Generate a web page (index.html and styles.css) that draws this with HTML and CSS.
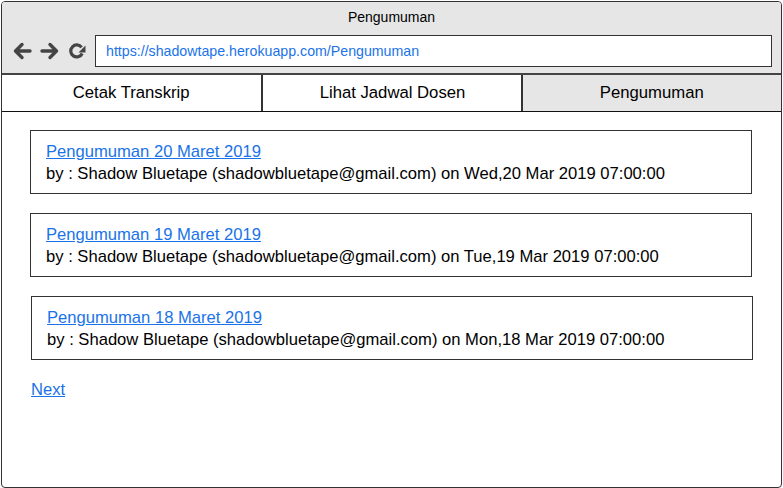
FILE: index.html
```html
<!DOCTYPE html>
<html>
<head>
<meta charset="utf-8">
<link rel="stylesheet" href="styles.css">
</head>
<body>
<div class="frame">
  <div class="chrome">
    <div class="title">Pengumuman</div>
    <div class="navbar">
      <div class="icons">
        <svg width="22" height="22" viewBox="0 0 22 22"><path d="M19 11H5M11 4.5L4.5 11L11 17.5" fill="none" stroke="#444" stroke-width="3.4" stroke-linecap="round" stroke-linejoin="round"/></svg>
        <svg width="22" height="22" viewBox="0 0 22 22"><path d="M3 11H17M11 4.5L17.5 11L11 17.5" fill="none" stroke="#444" stroke-width="3.4" stroke-linecap="round" stroke-linejoin="round"/></svg>
        <svg width="20" height="20" viewBox="0 0 20 20"><path d="M15.2 12.5A6 6 0 1 1 14.6 6.4" fill="none" stroke="#444" stroke-width="3.2"/><path d="M18.5 4.5L18.5 11.5L11.5 11.5Z" fill="#444"/></svg>
      </div>
      <div class="url">https://shadowtape.herokuapp.com/Pengumuman</div>
    </div>
  </div>
  <div class="tabs">
    <div class="tab">Cetak Transkrip</div>
    <div class="tab">Lihat Jadwal Dosen</div>
    <div class="tab active">Pengumuman</div>
  </div>
  <div class="content">
    <div class="card">
      <a href="#" class="link">Pengumuman 20 Maret 2019</a>
      <div class="meta">by : Shadow Bluetape (shadowbluetape@gmail.com) on Wed,20 Mar 2019 07:00:00</div>
    </div>
    <div class="card">
      <a href="#" class="link">Pengumuman 19 Maret 2019</a>
      <div class="meta">by : Shadow Bluetape (shadowbluetape@gmail.com) on Tue,19 Mar 2019 07:00:00</div>
    </div>
    <div class="card shifted">
      <a href="#" class="link">Pengumuman 18 Maret 2019</a>
      <div class="meta">by : Shadow Bluetape (shadowbluetape@gmail.com) on Mon,18 Mar 2019 07:00:00</div>
    </div>
    <a href="#" class="next">Next</a>
  </div>
</div>
</body>
</html>
```

FILE: styles.css
```css
* { box-sizing: border-box; }
html, body { margin: 0; padding: 0; background: #fff; }
body { font-family: "Liberation Sans", Arial, sans-serif; color: #000; }
.frame {
  margin: 1px 0 0 1px;
  width: 781px;
  height: 487px;
  border: 1px solid #333;
  border-radius: 4px;
  overflow: hidden;
  background: #fff;
  display: flex;
  flex-direction: column;
}
.chrome {
  background: #e6e6e6;
  height: 73px;
  border-bottom: 2px solid #444;
  padding: 0 9px 0 9px;
}
.title {
  height: 33px;
  line-height: 31px;
  text-align: center;
  font-size: 14px;
}
.navbar { display: flex; align-items: center; height: 32px; }
.icons { display: flex; align-items: center; gap: 6px; width: 84px; }
.icons svg { display: block; }
.url {
  flex: 1;
  height: 32px;
  background: #fff;
  border: 1px solid #333;
  color: #1a73e8;
  font-size: 14.2px;
  line-height: 30px;
  padding-left: 10px;
}
.tabs {
  display: flex;
  height: 37px;
  border-bottom: 1px solid #111;
}
.tab {
  flex: 1;
  text-align: center;
  font-size: 16.7px;
  line-height: 36px;
  border-left: 2px solid #333;
}
.tab:first-child { border-left: none; }
.tab:nth-child(2) { margin-left: 1px; }
.tab:nth-child(3) { margin-left: -1px; }
.active { background: #e6e6e6; }
.content { padding: 18px 29px 0 28px; }
.card {
  border: 1px solid #333;
  height: 64px;
  padding: 10px 15px 0 15px;
  margin-bottom: 19px;
  font-size: 16.6px;
  line-height: 22px;
}
.shifted { margin-left: 1px; margin-right: -1px; }
.link { color: #1a73e8; text-decoration: underline; }
.meta { color: #000; }
.next {
  display: inline-block;
  margin-left: 1px;
  color: #1a73e8;
  font-size: 16.6px;
  line-height: 22px;
}
```
